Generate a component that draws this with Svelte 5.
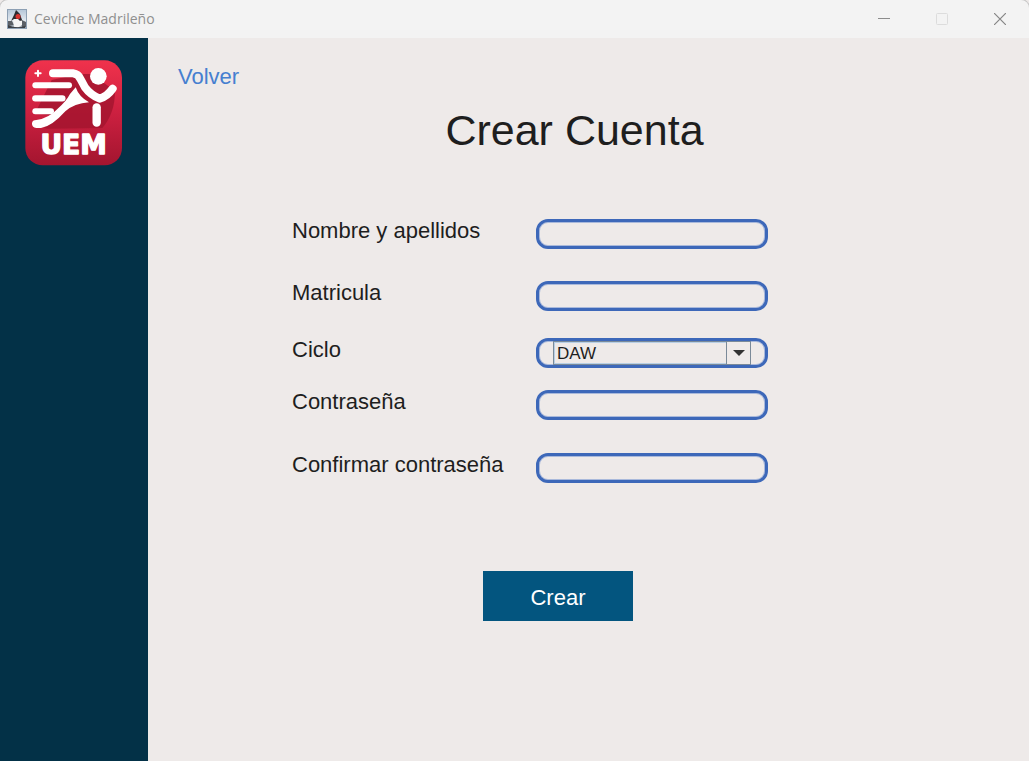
<script>
  let nombre = $state('');
  let matricula = $state('');
  let ciclo = $state('DAW');
  let clave = $state('');
  let confirmacion = $state('');
</script>

<div class="window">
  <header class="titlebar">
    <svg class="app-icon" viewBox="0 0 20 20" aria-hidden="true">
      <defs>
        <linearGradient id="cup-bg" x1="0" y1="0" x2="0" y2="1">
          <stop offset="0" stop-color="#b4c6d8" />
          <stop offset="0.6" stop-color="#e4eaf0" />
          <stop offset="1" stop-color="#8b98a6" />
        </linearGradient>
      </defs>
      <rect x="0.5" y="0.5" width="19" height="19" fill="url(#cup-bg)" stroke="#8da0b4" />
      <path d="M1 12l4 0 2 4-6 1zM13 10l6 3v5l-4 0z" fill="#5a5f66" />
      <path d="M6 10l5-1 4 3v4l-3 2H7z" fill="#f5f5f5" />
      <path d="M9 1l4 4 2 6-2 1-2-2-4 0-3 2 3-6z" fill="#2b2b30" />
      <path d="M1 16q8 4 17 1v2H1z" fill="#3c4046" />
      <circle cx="11" cy="7.5" r="2.5" fill="#d8322e" />
    </svg>
    <span class="caption">Ceviche Madrileño</span>
    <div class="controls">
      <button type="button" aria-label="Minimizar">
        <svg viewBox="0 0 12 12"><path d="M0 5.5h12" stroke="#8c8c8c" /></svg>
      </button>
      <button type="button" aria-label="Maximizar" disabled>
        <svg viewBox="0 0 12 12"><rect x="0.5" y="0.5" width="11" height="11" rx="1" fill="none" stroke="#dcdcdc" /></svg>
      </button>
      <button type="button" aria-label="Cerrar">
        <svg viewBox="0 0 12 12"><path d="M0 0l12 12M12 0L0 12" stroke="#858585" stroke-width="1.2" /></svg>
      </button>
    </div>
  </header>

  <div class="body">
    <aside class="sidebar">
      <svg class="logo" viewBox="30 30 294 318" role="img" aria-label="UEM">
        <defs>
          <linearGradient id="badge" x1="0" y1="0" x2="0" y2="1">
            <stop offset="0" stop-color="#f0324c" />
            <stop offset="0.5" stop-color="#cc2040" />
            <stop offset="1" stop-color="#a3152f" />
          </linearGradient>
        </defs>
        <rect x="31" y="31" width="290" height="315" rx="52" fill="url(#badge)" />
        <path d="M192 72L228 72L300 122Q300 190 262 234L96 236Q70 230 110 196L60 190L110 90Z" fill="#a5152f" opacity="0.85" />
        <path d="M61 70h16M69 62v16" stroke="#fff" stroke-width="6" stroke-linecap="round" />
        <g fill="none" stroke="#fff" stroke-linecap="round" stroke-linejoin="round">
          <path d="M114 70H174Q190 72 197 88L210 112Q226 134 254 146Q276 140 293 116" stroke-width="24" />
          <path d="M61 106H162" stroke-width="18" />
          <path d="M61 145H142" stroke-width="19" />
          <path d="M61 184H108" stroke-width="18" />
          <path d="M245 172V218" stroke-width="25" />
        </g>
        <circle cx="250" cy="79" r="25" fill="#fff" />
        <path d="M182 112Q192 141 222 157Q178 160 151 184Q110 230 78 234H64Q50 232 51 220Q52 210 64 210Q102 204 128 176Q153 155 165 132Z" fill="#fff" />
        <text class="logo-text" x="176" y="312" text-anchor="middle">UEM</text>
      </svg>
    </aside>

    <main class="content">
      <a class="back" href="#volver">Volver</a>
      <h1>Crear Cuenta</h1>

      <form onsubmit={(e) => e.preventDefault()}>
        <div class="fields">
          <label for="nombre">Nombre y apellidos</label>
          <input id="nombre" class="box" type="text" bind:value={nombre} />

          <label for="matricula">Matricula</label>
          <input id="matricula" class="box" type="text" bind:value={matricula} />

          <label for="ciclo">Ciclo</label>
          <div class="box combo">
            <select id="ciclo" bind:value={ciclo}>
              <option>DAW</option>
              <option>DAM</option>
              <option>ASIR</option>
            </select>
            <span class="arrow" aria-hidden="true">
              <svg viewBox="0 0 12 6"><path d="M0 0h12L6 6z" fill="#333" /></svg>
            </span>
          </div>

          <label for="clave">Contraseña</label>
          <input id="clave" class="box" type="password" bind:value={clave} />

          <label for="confirmacion">Confirmar contraseña</label>
          <input id="confirmacion" class="box" type="password" bind:value={confirmacion} />
        </div>
        <button class="submit" type="submit">Crear</button>
      </form>
    </main>
  </div>
</div>

<style>
  :global(body) {
    margin: 0;
    background: #eeeae9;
  }

  .window {
    display: flex;
    flex-direction: column;
    min-height: 100vh;
    font-family: 'Liberation Sans', Arial, sans-serif;
    color: #1e1e1e;
    background: #eeeae9;
  }

  .titlebar {
    display: flex;
    align-items: center;
    height: 38px;
    padding-left: 7px;
    box-sizing: border-box;
    border-top-left-radius: 8px;
    border-top-right-radius: 8px;
    background: #f3f3f3;
    box-shadow: 0 0 0 1px #c4c4c4;
    clip-path: inset(0);
  }

  .app-icon {
    width: 20px;
    height: 20px;
  }

  .caption {
    margin-left: 7px;
    font: 14px/20px 'Open Sans', 'Noto Sans', sans-serif;
    color: #8f8f8f;
  }

  .controls {
    display: flex;
    align-self: stretch;
    margin-left: auto;
  }

  .controls button {
    display: flex;
    align-items: center;
    justify-content: center;
    width: 58px;
    padding: 0;
    border: 0;
    background: none;
  }

  .controls svg {
    width: 12px;
    height: 12px;
  }

  .body {
    display: flex;
    flex: 1;
  }

  .sidebar {
    flex: none;
    width: 148px;
    box-sizing: border-box;
    padding-top: 22px;
    background: #033147;
  }

  .logo {
    display: block;
    width: 98px;
    height: 106px;
    margin: 0 auto;
  }

  .logo-text {
    font: bold 80px 'DejaVu Sans', sans-serif;
    fill: #fff;
    stroke: #fff;
    stroke-width: 4px;
    stroke-linejoin: round;
  }

  .content {
    display: flex;
    flex: 1;
    flex-direction: column;
    align-items: flex-start;
    padding: 27px 30px;
  }

  .back {
    font-size: 22px;
    line-height: 24px;
    color: #467fd0;
    text-decoration: none;
  }

  h1 {
    align-self: center;
    margin: 16px 28px 0 0;
    font-size: 43px;
    font-weight: 400;
    line-height: 50px;
  }

  form {
    display: flex;
    flex-direction: column;
    margin: 64px 0 0 114px;
  }

  .fields {
    display: grid;
    grid-template-columns: 244px 232px;
    grid-template-rows: 62px 57px 52px 63px 30px;
    align-items: start;
  }

  label {
    font-size: 22px;
    line-height: 24px;
    white-space: nowrap;
  }

  .box {
    width: 100%;
    height: 30px;
    box-sizing: border-box;
    margin: 0;
    padding: 0 14px;
    border: 3px solid #3d68b9;
    border-radius: 12px;
    outline: 0;
    background: transparent;
    box-shadow: inset 0 0 0 1px #a9b9db;
    font: 17px/20px 'Liberation Sans', Arial, sans-serif;
    color: #1e1e1e;
  }

  .combo {
    display: grid;
    grid-template-columns: 1fr 25px;
  }

  select {
    grid-area: 1 / 1 / 2 / 3;
    appearance: none;
    margin: 0;
    padding: 2px 28px 0 3px;
    border: 1px solid #7a8a99;
    border-radius: 0;
    outline: 0;
    background: transparent;
    box-shadow: inset 0 0 0 1px #b8cfe5;
    font: inherit;
    color: inherit;
  }

  .arrow {
    display: flex;
    grid-area: 1 / 2;
    align-items: center;
    justify-content: center;
    border: 1px solid #7a8a99;
    background: #eeeae9;
    pointer-events: none;
  }

  .arrow svg {
    width: 12px;
    height: 6px;
  }

  .submit {
    align-self: center;
    width: 150px;
    height: 50px;
    margin: 88px 0 0 56px;
    padding: 3px 0 0;
    border: 0;
    background: #03557f;
    font: 22px/24px 'Liberation Sans', Arial, sans-serif;
    color: #fff;
  }
</style>
